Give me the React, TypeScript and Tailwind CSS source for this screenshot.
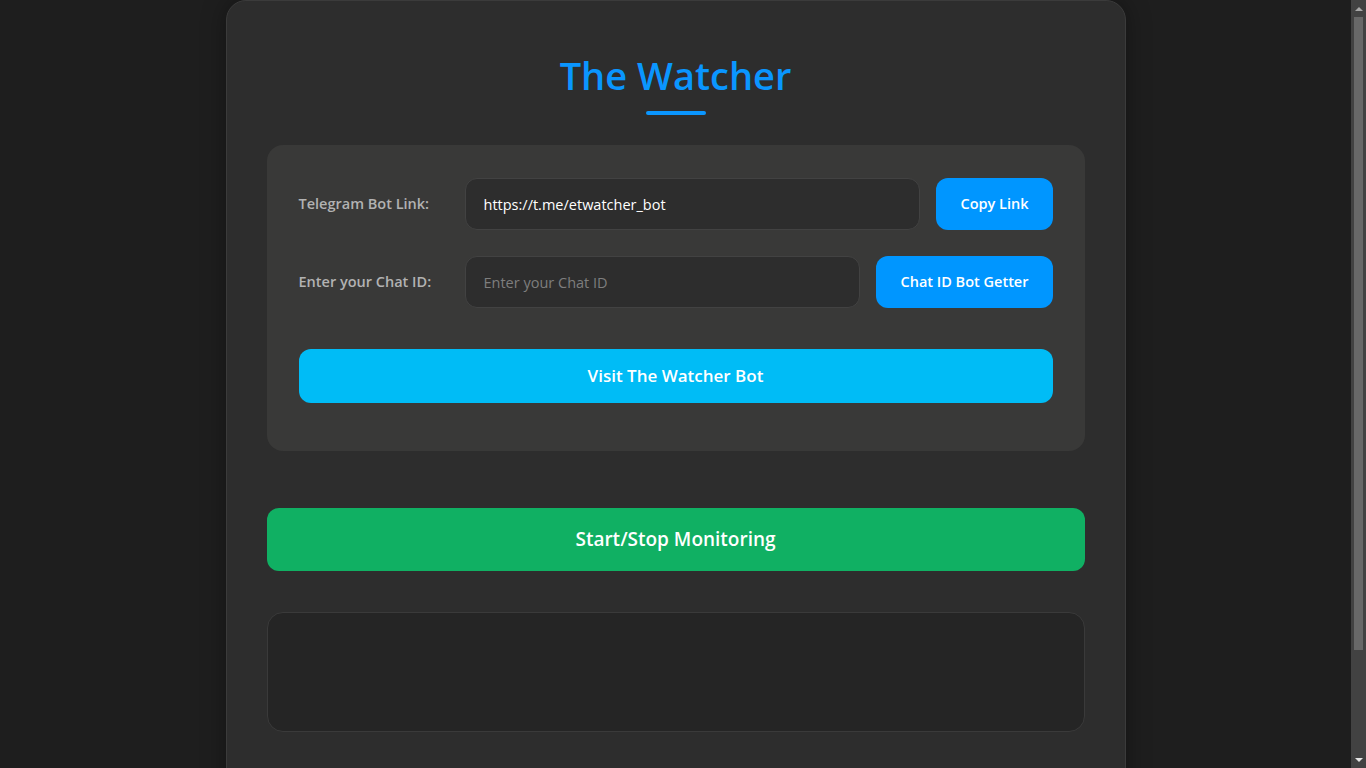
import { useState } from "react";

export default function App() {
  const [chatId, setChatId] = useState("");
  const link = "https://t.me/etwatcher_bot";

  return (
    <div className="flex h-screen bg-[#1e1e1e] font-['Open_Sans','Noto_Sans',sans-serif]">
      <div className="flex-1 overflow-y-auto [scrollbar-width:none]">
        <div className="mx-auto mb-10 w-[900px] rounded-[20px] border border-[#3b3b3b] bg-[#2d2d2d] px-10 pb-20 pt-12 shadow-[0_0_24px_rgba(0,0,0,0.35)]">
          <div className="flex flex-col items-center">
            <h1 className="text-[38px] font-semibold leading-[52px] text-[#0a96ff]">
              The Watcher
            </h1>
            <div className="mt-[10px] h-[4px] w-[60px] rounded-full bg-[#0a96ff]" />
          </div>

          <div className="mt-[30px] rounded-[16px] bg-[#393938] px-8 pb-12 pt-[33px]">
            <div className="flex items-center gap-4">
              <label className="w-[150px] text-[14.5px] font-semibold text-[#b2b2b2]">
                Telegram Bot Link:
              </label>
              <input
                readOnly
                value={link}
                className="h-[52px] flex-1 rounded-[12px] border border-[#424242] bg-[#2d2d2d] px-[18px] text-[14.5px] text-white outline-none"
              />
              <button className="h-[52px] rounded-[12px] bg-[#0096ff] px-6 text-[14.5px] font-semibold text-white">
                Copy Link
              </button>
            </div>

            <div className="mt-[26px] flex items-center gap-4">
              <label className="w-[150px] text-[14.5px] font-semibold text-[#b2b2b2]">
                Enter your Chat ID:
              </label>
              <input
                value={chatId}
                onChange={(e) => setChatId(e.target.value)}
                placeholder="Enter your Chat ID"
                className="h-[52px] flex-1 rounded-[12px] border border-[#424242] bg-[#2d2d2d] px-[18px] text-[14.5px] text-white outline-none placeholder:text-[#7e7e7e]"
              />
              <button className="h-[52px] rounded-[12px] bg-[#0096ff] px-6 text-[14.5px] font-semibold text-white">
                Chat ID Bot Getter
              </button>
            </div>

            <button className="mt-[41px] h-[54px] w-full rounded-[12px] bg-[#00bcf6] text-[17px] font-semibold text-white">
              Visit The Watcher Bot
            </button>
          </div>

          <button className="mt-[57px] h-[63px] w-full rounded-[12px] bg-[#10b063] text-[19px] font-semibold text-white">
            Start/Stop Monitoring
          </button>

          <div className="mt-[41px] h-[120px] rounded-[16px] border border-[#3a3a3a] bg-[#252525]" />
        </div>
      </div>

      {/* scrollbar strip */}
      <div className="flex w-[15px] flex-col items-center bg-[#424242]">
        <div className="flex h-[17px] items-center justify-center">
          <div className="h-0 w-0 border-x-[4px] border-b-[4px] border-x-transparent border-b-[#a8a8a8]" />
        </div>
        <div className="h-[633px] w-[9px] bg-[#686868]" />
        <div className="flex-1" />
        <div className="flex h-[17px] items-center justify-center">
          <div className="h-0 w-0 border-x-[4px] border-t-[4px] border-x-transparent border-t-[#e6e6e6]" />
        </div>
      </div>
    </div>
  );
}
